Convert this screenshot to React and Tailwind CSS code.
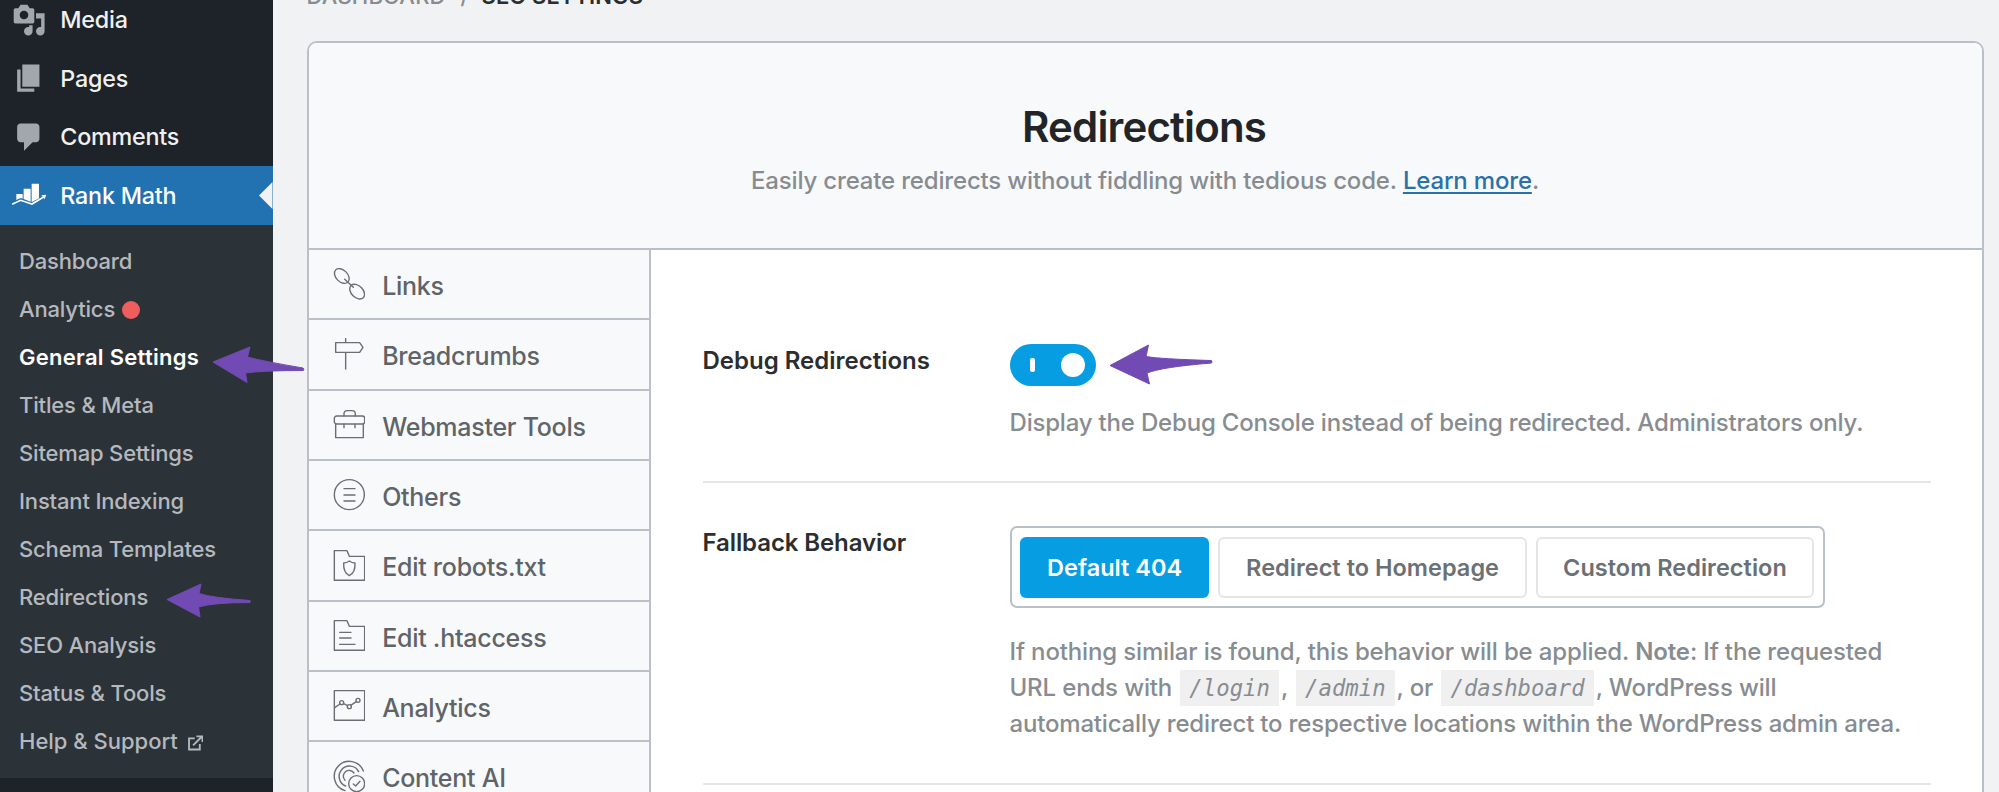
import React from "react";

const STROKE = { fill: "none", stroke: "#6a6f74", strokeWidth: 4.2, strokeLinejoin: "round", strokeLinecap: "round" };

function TabIcon({ children }) {
  return (
    <svg viewBox="0 0 98 98" className="-mt-[1px] h-[32.67px] w-[32.67px] shrink-0" {...STROKE}>
      {children}
    </svg>
  );
}

const FOLDER = "M4 5H42L49 22H95V94H4Z";

const TABS = [
  {
    label: "Links",
    icon: (
      <>
        <ellipse cx="26.5" cy="27" rx="26" ry="17.5" transform="rotate(45 26.5 27)" />
        <ellipse cx="72.5" cy="74" rx="26" ry="17.5" transform="rotate(45 72.5 74)" />
        <path d="M35 37L61 61" />
      </>
    ),
  },
  {
    label: "Breadcrumbs",
    icon: <path d="M8 14H80L90 28L80 43H8ZM38 2V14M38 43V93" />,
  },
  {
    label: "Webmaster Tools",
    icon: (
      <>
        <rect x="4" y="24" width="91" height="24" rx="7" />
        <path d="M8 48V89H91V48M33 24V18Q33 8 43 8H57Q67 8 67 18V24M33 49V59M66 49V59" />
      </>
    ),
  },
  {
    label: "Others",
    icon: (
      <>
        <circle cx="49" cy="50" r="45" />
        <path d="M33 32H66M33 51H66M33 69H66" />
      </>
    ),
  },
  {
    label: "Edit robots.txt",
    icon: (
      <>
        <path d={FOLDER} />
        <path d="M49 36Q57 42 66 42C67 62 63 73 49 80C35 73 31 62 32 42Q41 42 49 36Z" />
      </>
    ),
  },
  {
    label: "Edit .htaccess",
    icon: (
      <>
        <path d={FOLDER} />
        <path d="M20 40H54M20 57H54M20 76H66" />
      </>
    ),
  },
  {
    label: "Analytics",
    icon: (
      <>
        <rect x="4" y="5" width="91" height="89" />
        <circle cx="26" cy="41" r="6" />
        <circle cx="49" cy="53" r="6" />
        <circle cx="75" cy="34" r="6" />
        <path d="M5 56L21 45M32 44L44 50M53 49L70 38" />
      </>
    ),
  },
  {
    label: "Content AI",
    icon: (
      <>
        <path d="M91 33A45 45 0 1 0 36 92" />
        <path d="M77 35A31 31 0 1 0 38 78" />
        <path d="M63 39A17.500 17.500 0 1 0 36 61" />
        <circle cx="71" cy="71" r="24" fill="#f8f9fb" />
        <path d="M61 72L68 78L81 64" />
      </>
    ),
  },
];

function DashIcon({ d }) {
  return (
    <svg viewBox="0 0 20 20" className="h-[34.3px] w-[34.3px] shrink-0 fill-[#a2a7ad]">
      <path fillRule="evenodd" d={d} />
    </svg>
  );
}

const MENU = [
  {
    label: "Media",
    d: "M13 11V4c0-.55-.45-1-1-1h-1.67L9 1H5L3.67 3H2c-.55 0-1 .45-1 1v7c0 .55.45 1 1 1h10c.55 0 1-.45 1-1zM7 4.500c1.380 0 2.500 1.120 2.500 2.500S8.380 9.500 7 9.500 4.500 8.380 4.500 7 5.620 4.500 7 4.500zM14 6h5v10.500c0 1.380-1.120 2.500-2.500 2.500S14 17.880 14 16.500s1.120-2.500 2.500-2.500c.17 0 .34.02.5.05V9h-3V6zm-4 8.050V13h2v3.500c0 1.380-1.120 2.500-2.500 2.500S7 17.880 7 16.500 8.120 14 9.500 14c.17 0 .34.02.5.05z",
  },
  { label: "Pages", d: "M6 15V2h10v13H6zm-1 1h8v2H3V5h2v11z" },
  {
    label: "Comments",
    d: "M5 2h9c1.100 0 2 .9 2 2v7c0 1.100-.9 2-2 2h-2l-5 5v-5H5c-1.100 0-2-.9-2-2V4c0-1.100.9-2 2-2z",
  },
];

const SUBMENU = [
  "Dashboard",
  "Analytics",
  "General Settings",
  "Titles & Meta",
  "Sitemap Settings",
  "Instant Indexing",
  "Schema Templates",
  "Redirections",
  "SEO Analysis",
  "Status & Tools",
  "Help & Support",
];

function Sidebar() {
  return (
    <aside className="flex h-full w-[272.5px] shrink-0 flex-col bg-[#1d2328]">
      <nav className="-mt-[9px] flex flex-col text-[23.3px] font-[450] tracking-[-0.2px] text-[#f0f0f1]">
        {MENU.map((m) => (
          <a key={m.label} className="flex h-[58.4px] items-center gap-[14px] pl-[12px]">
            <DashIcon d={m.d} />
            <span className="mt-[1px]">{m.label}</span>
          </a>
        ))}
        <a className="flex h-[58.6px] items-center bg-[#2271b1] pl-[12px] text-white">
          <svg viewBox="36 536 103 103" className="h-[34.3px] w-[34.3px] shrink-0 overflow-visible">
            <g fill="#fff">
              <path d="M49 584H68V598L62 596L49 602Z" />
              <path d="M71 568H92V607L71 599Z" />
              <path d="M95 553H117V597L96 608L95 608Z" />
              <path d="M124 588L139 586L134 600Z" />
            </g>
            <path d="M38 614L62 603L96 614L131 593" fill="none" stroke="#fff" strokeWidth="5" strokeLinecap="round" />
          </svg>
          <span className="mt-[1px] ml-[14px] flex-1">Rank Math</span>
          <svg viewBox="0 0 13.5 27" className="h-[27px] w-[13.5px] fill-[#f1f2f4]">
            <path d="M13.500 0V27L0 13.500Z" />
          </svg>
        </a>
      </nav>
      <ul className="flex flex-col bg-[#2c3338] pt-[13px] pb-[12px] text-[22px] font-[450] tracking-[-0.17px] text-[#b5b9be]">
        {SUBMENU.map((label) => (
          <li key={label} className="flex h-[48px] items-center pl-[19px]">
            {label === "General Settings" ? (
              <span className="font-semibold tracking-[0.28px] text-white">{label}</span>
            ) : label === "Help & Support" ? (
              <span className="tracking-[0px]">{label}</span>
            ) : (
              <span>{label}</span>
            )}
            {label === "Analytics" && <span className="ml-[7px] h-[18px] w-[18px] rounded-full bg-[#ee5e5c]" />}
            {label === "Help & Support" && (
              <svg viewBox="0 0 46 46" className="mt-[2px] ml-[10px] h-[15.500px] w-[15.500px]" fill="none" stroke="#b5b9be" strokeWidth="5.5">
                <path d="M20 10H3V43H35V27" />
                <path d="M15 31L40 6M25 4H43V21" />
              </svg>
            )}
          </li>
        ))}
      </ul>
    </aside>
  );
}

function Code({ children }) {
  return (
    <code className="mx-[2px] bg-[#f0f0f1] px-[9px] py-[5px] font-['DejaVu_Sans_Mono',monospace] text-[22.3px] tracking-normal italic">
      {children}
    </code>
  );
}

function Arrow({ className, viewBox, d }) {
  return (
    <svg viewBox={viewBox} className={className}>
      <path d={d} fill="#714bb3" stroke="#714bb3" strokeWidth="1" strokeLinejoin="round" />
    </svg>
  );
}

export default function App() {
  return (
    <div className="relative flex h-[792px] w-[1999px] overflow-hidden bg-[#f1f2f4] font-['Inter',sans-serif]">
      <Sidebar />
      <main className="flex min-w-0 flex-1 flex-col pr-[15.500px] pl-[34px]">
        <div className="-mt-[16px] flex h-[57px] shrink-0 text-[22px] leading-[24px]">
          <span className="w-[154px] font-medium tracking-[0.2px] text-[#868b90]">DASHBOARD</span>
          <span className="w-[21px] font-medium text-[#868b90]">/</span>
          <span className="font-semibold tracking-[0.1px] text-[#2b2d2f]">SEO SETTINGS</span>
        </div>
        <section className="flex h-[780px] shrink-0 flex-col rounded-[10px] border-2 border-[#b9c0c8] bg-white">
          <header className="flex h-[207px] shrink-0 flex-col items-center rounded-t-[8px] border-b-2 border-[#b9c0c8] bg-[#f8f9fb]">
            <h1 className="mt-[58px] -ml-[2px] text-[42px] leading-[52px] font-semibold tracking-[-0.85px] text-[#222427]">Redirections</h1>
            <p className="mt-[10px] text-[24px] leading-[36px] font-[450] tracking-[-0.17px] text-[#878c91]">
              Easily create redirects without fiddling with tedious code.{" "}
              <a className="text-[#2a71a9] underline decoration-2 underline-offset-[3px]">Learn more</a>.
            </p>
          </header>
          <div className="flex min-h-0 flex-1">
            <ul className="w-[342px] shrink-0 border-r-2 border-[#b9c0c8] bg-[#f8f9fb] text-[25px] font-[450] tracking-[-0.26px] text-[#5f6468]">
              {TABS.map((t) => (
                <li key={t.label} className="flex h-[70.35px] items-center border-b-2 border-[#b9c0c8] pl-[24px]">
                  <TabIcon>{t.icon}</TabIcon>
                  <span className="mt-[5px] ml-[17px]">{t.label}</span>
                </li>
              ))}
            </ul>
            <div className="flex flex-1 flex-col pr-[50.500px] pl-[52px] text-[24px] leading-[36px] font-[450] tracking-[-0.19px] text-[#878c91]">
              <div className="flex h-[233px] shrink-0 border-b-2 border-[#e4e6e8] pt-[93px]">
                <h2 className="w-[307px] shrink-0 font-semibold tracking-[0px] text-[#2b2d2f]">Debug Redirections</h2>
                <div className="pt-[1px]">
                  <div className="flex h-[42px] w-[86px] items-center justify-between rounded-full bg-[#069de3] pr-[11px] pl-[20px]">
                    <span className="h-[14px] w-[5px] rounded-[2px] bg-white" />
                    <span className="h-[24px] w-[24px] rounded-full bg-white" />
                  </div>
                  <p className="mt-[19px]">Display the Debug Console instead of being redirected. Administrators only.</p>
                </div>
              </div>
              <div className="flex h-[302px] shrink-0 border-b-2 border-[#e4e6e8] pt-[43px]">
                <h2 className="-mt-[1px] w-[307px] shrink-0 font-semibold tracking-[-0.1px] text-[#2b2d2f]">Fallback Behavior</h2>
                <div>
                  <div className="flex h-[82px] w-[815px] gap-[9px] rounded-[7px] border-2 border-[#b9c0c8] p-[8.500px] text-[23.500px] font-semibold tracking-[0.02px] text-[#6b7075]">
                    <button className="w-[189.500px] rounded-[6px] bg-[#069de3] pt-[1px] text-white">Default 404</button>
                    <button className="w-[309px] rounded-[6px] border-2 border-[#e3e5e7] pt-[1px]">Redirect to Homepage</button>
                    <button className="w-[278.500px] rounded-[6px] border-2 border-[#e3e5e7] pt-[1px]">Custom Redirection</button>
                  </div>
                  <p className="mt-[26px] tracking-[-0.15px] whitespace-nowrap">
                    If nothing similar is found, this behavior will be applied. <strong className="font-semibold">Note</strong>: If the requested
                    <br />
                    URL ends with <Code>/login</Code>, <Code>/admin</Code>, or <Code>/dashboard</Code>, WordPress will
                    <br />
                    <span className="tracking-[-0.18px]">automatically redirect to respective locations within the WordPress admin area.</span>
                  </p>
                </div>
              </div>
            </div>
          </div>
        </section>
      </main>

      <Arrow
        className="absolute top-[344px] left-[210px] h-[42px] w-[96px]"
        viewBox="210 344 96 42"
        d="M213 362L250 347L247.500 357Q262 361 303 368Q305 370 303 370.500Q262 370.500 245.500 373L247 382.500Z"
      />
      <Arrow
        className="absolute top-[582px] left-[164px] h-[38px] w-[90px]"
        viewBox="164 582 90 38"
        d="M167 599.500L201 584L199 593.500Q213 598 250 600.500Q251 601.500 250 602.500Q213 602.500 198.500 607L200 617Z"
      />
      <Arrow
        className="absolute top-[343px] left-[1108px] h-[44px] w-[108px]"
        viewBox="1108 343 108 44"
        d="M1110 365.500L1148.500 345L1146 356.500Q1160 359 1211.500 360.500Q1212.500 362 1211.500 363Q1162 367 1147 373L1149.500 384Z"
      />
    </div>
  );
}
